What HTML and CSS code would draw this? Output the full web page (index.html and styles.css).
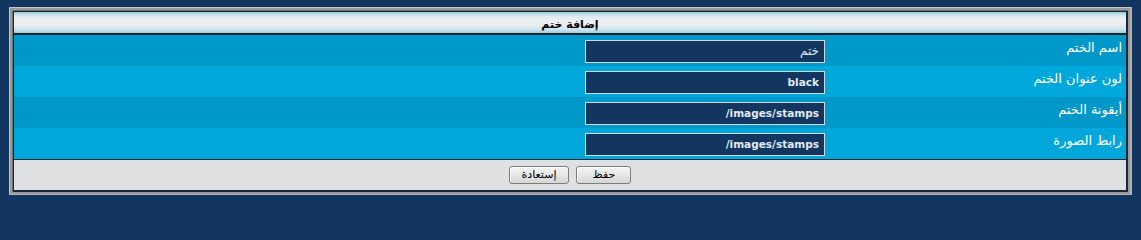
FILE: index.html
```html
<!DOCTYPE html>
<html lang="ar" dir="rtl">
<head>
<meta charset="utf-8">
<title>إضافة ختم</title>
<link rel="stylesheet" href="styles.css">
</head>
<body>
<div class="frame">
  <div class="frame-in">
    <form class="panel">
      <div class="head">إضافة ختم</div>
      <div class="row row-a">
        <label class="lbl">اسم الختم</label>
        <input class="inp inp-ar" type="text" value="ختم">
      </div>
      <div class="row row-b">
        <label class="lbl">لون عنوان الختم</label>
        <input class="inp" type="text" value="black">
      </div>
      <div class="row row-a">
        <label class="lbl">أيقونة الختم</label>
        <input class="inp" type="text" value="images/stamps/">
      </div>
      <div class="row row-b">
        <label class="lbl">رابط الصورة</label>
        <input class="inp" type="text" value="images/stamps/">
      </div>
      <div class="foot">
        <button class="btn" type="button">حفظ</button>
        <button class="btn" type="button">إستعادة</button>
      </div>
    </form>
  </div>
</div>
</body>
</html>
```

FILE: styles.css
```css
html, body {
  margin: 0;
  padding: 0;
  background: #12365f;
}

body {
  font-family: "DejaVu Sans", Verdana, sans-serif;
  font-size: 11px;
}

.frame {
  margin: 7px 9px 0 9px;
  border-style: solid;
  border-width: 1px 2px 1px 1px;
  border-color: #c6c6c6 #b2b2b2 #b2b2b2 #c6c6c6;
  background: #9a9a9a;
  padding: 2px;
}

.frame-in {
  border-top: 1px solid #6f6f6f;
  border-left: 1px solid #6f6f6f;
}

.panel {
  margin: 0;
  border-style: solid;
  border-color: #1b2833;
  border-width: 1px 2px 2px 1px;
}

.head {
  height: 15px;
  padding-top: 6px;
  border-bottom: 2px solid #14222c;
  background: linear-gradient(to bottom,
    #86c6df 0px, #bfe0ec 2px, #e4edf1 5px, #eef1f3 10px,
    #e2eaee 15px, #c6e2ed 18px, #9fd0e4 21px);
  color: #000;
  font-size: 11px;
  font-weight: bold;
  text-align: center;
  line-height: 14px;
}

.row {
  display: flex;
  align-items: center;
  height: 31px;
}

.row-a { background: #0097c9; }
.row-b { background: #00a7da; }

.lbl {
  width: 301px;
  box-sizing: border-box;
  padding-right: 4px;
  align-self: flex-start;
  padding-top: 5px;
  color: #ffffff;
  font-size: 13px;
  line-height: 16px;
}

.inp {
  width: 240px;
  height: 23px;
  box-sizing: border-box;
  margin: 1px 0 0 0;
  padding: 0 5px;
  border: 1px solid #cfd8df;
  background: #133661;
  color: #e2e9f0;
  font-family: "DejaVu Sans", Verdana, sans-serif;
  font-size: 10.5px;
  font-weight: bold;
  text-align: right;
  direction: rtl;
  outline: none;
}

.inp-ar {
  font-weight: normal;
  font-size: 12px;
}

.foot {
  height: 30px;
  border-top: 1px solid #1b2833;
  background: #dfe0e2;
  display: flex;
  justify-content: center;
  align-items: center;
  gap: 7px;
}

.btn {
  height: 18px;
  min-width: 55px;
  box-sizing: border-box;
  padding: 0 12px;
  margin-top: -1px;
  border: 1px solid #7c7c7c;
  border-radius: 3px;
  background: linear-gradient(to bottom, #f4f4f4 0%, #e6e6e6 50%, #d6d6d6 100%);
  box-shadow: inset 1px 1px 0 #ffffff;
  color: #000;
  font-family: "DejaVu Sans", Verdana, sans-serif;
  font-size: 11px;
  line-height: 14px;
}
```
